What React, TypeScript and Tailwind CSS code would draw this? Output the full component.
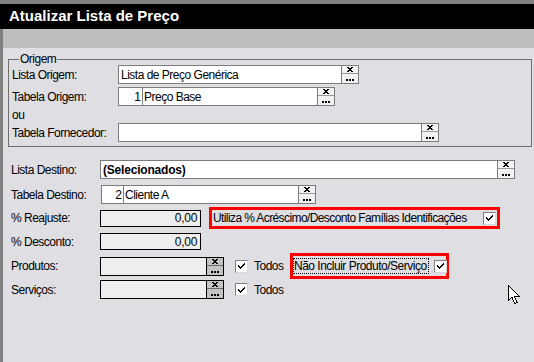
import React from "react";

const F = { fontFamily: '"Liberation Sans", Arial, sans-serif' };

function XIcon() {
  return (
    <svg width="6" height="5" viewBox="0 0 6 5" shapeRendering="crispEdges">
      <path d="M0 0h2v1H0zM4 0h2v1H4zM1 1h4v1H1zM2 2h2v1H2zM1 3h4v1H1zM0 4h2v1H0zM4 4h2v1H4z" fill="#000" />
    </svg>
  );
}

function Dots() {
  return (
    <svg width="8" height="2" viewBox="0 0 8 2" shapeRendering="crispEdges">
      <path d="M0 0h2v2H0zM3 0h2v2H3zM6 0h2v2H6z" fill="#000" />
    </svg>
  );
}

function SmallBtn({ dark = false }: { dark?: boolean }) {
  return (
    <div
      className={
        dark
          ? "w-[17px] h-full flex flex-col border border-l-0 border-black bg-[#c4c4c4]"
          : "w-[17px] h-full flex flex-col border border-l-0 border-[#7c7c7c] bg-[#f2f2f2]"
      }
    >
      <div className={dark ? "flex-1 flex items-center justify-center border-b border-[#6a6a6a]" : "flex-1 flex items-center justify-center border-b border-[#9a9a9a]"}>
        <XIcon />
      </div>
      <div className="flex-1 flex items-end justify-center pb-[2px]">
        <Dots />
      </div>
    </div>
  );
}

function Check() {
  return (
    <div className="w-[13px] h-[13px] border border-t-[#808080] border-l-[#808080] border-b-[#d8d8d8] border-r-[#d8d8d8] bg-white flex items-center justify-center shrink-0">
      <svg width="9" height="8" viewBox="0 0 9 8" shapeRendering="crispEdges">
        <path d="M1 3h1v1h1v1h1V4h1V3h1V2h1V1h1v2H7v1H6v1H5v1H4v1H3V6H2V5H1z" fill="#000" />
      </svg>
    </div>
  );
}

function Label({ children, w }: { children: React.ReactNode; w: string }) {
  return <div className={`${w} shrink-0 whitespace-nowrap text-[12px] tracking-[-0.5px] leading-none text-black`}>{children}</div>;
}

export default function App() {
  return (
    <div className="w-[534px] h-[362px] bg-[#dfdee3] overflow-hidden flex flex-col relative" style={F}>
      <div className="h-[4px] bg-[#808080] shrink-0" />
      <div className="h-[25px] shrink-0 bg-black text-white font-bold text-[15px] pl-[9px] flex items-center">
        Atualizar Lista de Preço
      </div>
      <div className="flex-1 flex">
        <div className="w-[3px] bg-[#808080] shrink-0" />
        <div className="flex-1 flex flex-col">
          <div className="h-[19px] bg-[#bebebe] shrink-0" />

          {/* Origem group */}
          <div className="relative mt-[11px] ml-[5px] mr-[2px] h-[88px] border border-[#6e6e6e] flex flex-col pl-[3px]">
            <div className="absolute -top-[8px] left-[10px] px-[1px] bg-[#dfdee3] text-[12px] tracking-[-0.5px] leading-[15px] text-black">Origem</div>
            {/* row 1 */}
            <div className="mt-[5px] h-[19px] flex items-center">
              <Label w="w-[106px]">Lista Origem:</Label>
              <div className="h-full w-[224px] bg-white border border-[#7c7c7c] flex items-center pl-[2px] text-[12px] tracking-[-0.5px] text-black whitespace-nowrap">
                Lista de Preço Genérica
              </div>
              <SmallBtn />
            </div>
            {/* row 2 */}
            <div className="mt-[3px] h-[19px] flex items-center">
              <Label w="w-[106px]">Tabela Origem:</Label>
              <div className="h-full w-[25px] bg-white border border-[#7c7c7c] flex items-center justify-end pr-[1px] text-[12px] text-black">1</div>
              <div className="h-full w-[175px] bg-white border border-l-0 border-[#7c7c7c] flex items-center pl-[1px] text-[12px] tracking-[-0.5px] text-black whitespace-nowrap">
                Preço Base
              </div>
              <SmallBtn />
            </div>
            <div className="h-[17px] pt-[1px] flex items-center text-[12px] tracking-[-0.5px] leading-none text-black">ou</div>
            {/* row 3 */}
            <div className="h-[19px] flex items-center">
              <Label w="w-[106px]">Tabela Fornecedor:</Label>
              <div className="h-full w-[304px] bg-white border border-[#7c7c7c]" />
              <SmallBtn />
            </div>
          </div>

          <div className="flex flex-col pl-[8px]">
            {/* Lista Destino */}
            <div className="mt-[13px] h-[19px] flex items-center">
              <Label w="w-[89px]">Lista Destino:</Label>
              <div className="h-full w-[398px] bg-white border border-[#7c7c7c] flex items-center pl-[2px] text-[12px] tracking-[-0.2px] font-bold text-black whitespace-nowrap">
                (Selecionados)
              </div>
              <SmallBtn />
            </div>
            {/* Tabela Destino */}
            <div className="mt-[6px] h-[19px] flex items-center">
              <Label w="w-[90px]">Tabela Destino:</Label>
              <div className="h-full w-[23px] bg-white border border-[#7c7c7c] flex items-center justify-end pr-[1px] text-[12px] text-black">2</div>
              <div className="h-full w-[175px] bg-white border border-l-0 border-[#7c7c7c] flex items-center pl-[1px] text-[12px] tracking-[-0.5px] text-black whitespace-nowrap">
                Cliente A
              </div>
              <SmallBtn />
            </div>
            {/* Reajuste */}
            <div className="mt-[3px] h-[22px] flex items-center">
              <Label w="w-[89px]">% Reajuste:</Label>
              <div className="h-[17px] w-[101px] bg-[#eeeeee] border border-black flex items-center justify-end pr-[3px] text-[12px] tracking-[-0.3px] text-black">0,00</div>
              <div className="ml-[8px] h-full w-[291px] border-[3px] border-[#ff0000] flex items-center justify-between pl-[1px] pr-[1px] text-[12px] tracking-[-0.6px] text-black whitespace-nowrap">
                <span className="leading-none">Utiliza % Acréscimo/Desconto Famílias Identificações</span>
                <Check />
              </div>
            </div>
            {/* Desconto */}
            <div className="mt-[4px] h-[17px] flex items-center">
              <Label w="w-[89px]">% Desconto:</Label>
              <div className="h-[17px] w-[101px] bg-[#eeeeee] border border-black flex items-center justify-end pr-[3px] text-[12px] tracking-[-0.3px] text-black">0,00</div>
            </div>
            {/* Produtos */}
            <div className="mt-[3px] h-[26px] flex items-center">
              <Label w="w-[89px]">Produtos:</Label>
              <div className="h-[19px] flex">
                <div className="h-full w-[107px] bg-[#eeeeee] border border-black" />
                <SmallBtn dark />
              </div>
              <div className="w-[66px] flex items-center pl-[11px]">
                <Check />
                <span className="ml-[6px] text-[12px] tracking-[-0.5px] leading-none text-black">Todos</span>
              </div>
              <div className="h-full w-[159px] border-[3px] border-[#ff0000] flex items-center text-[12px] tracking-[-0.5px] text-black whitespace-nowrap">
                <span className="h-[16px] border border-dotted border-black flex items-center pr-[1px] leading-none">Não Incluir Produto/Serviço</span>
                <div className="ml-[5px]">
                  <Check />
                </div>
              </div>
            </div>
            {/* Serviços */}
            <div className="mt-[1px] h-[19px] flex items-center">
              <Label w="w-[89px]">Serviços:</Label>
              <div className="h-[19px] flex">
                <div className="h-full w-[107px] bg-[#eeeeee] border border-black" />
                <SmallBtn dark />
              </div>
              <div className="w-[66px] flex items-center pl-[11px]">
                <Check />
                <span className="ml-[6px] text-[12px] tracking-[-0.5px] leading-none text-black">Todos</span>
              </div>
            </div>
          </div>
        </div>
      </div>

      {/* mouse cursor */}
      <svg className="absolute left-[508px] top-[285px]" width="13" height="20" viewBox="0 0 13 20" shapeRendering="crispEdges">
        <path d="M0.5 0.5 L0.5 15.5 L4 12 L6.5 18.5 L9 17.5 L6.5 11.5 L11.5 11.5 Z" fill="#fff" stroke="#000" strokeWidth="1" />
      </svg>
    </div>
  );
}
